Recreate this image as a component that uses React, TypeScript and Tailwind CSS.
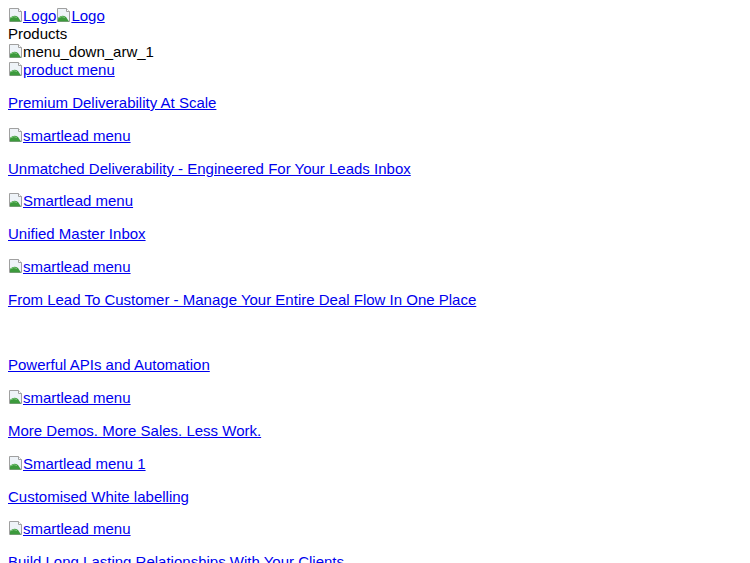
const BrokenImg = () => (
  <svg width="15" height="16" viewBox="0 0 15 16" className="inline-block align-[-2px]">
    <path d="M1.5 1.5h9l3 3v10h-12z" fill="#eef3f8" stroke="#a0a0a0" />
    <path d="M2 14.5 L2 11 Q6 7 10 10 L13 14.5 Z" fill="#3c9a3c" />
    <path d="M2 11 Q6 8.5 9 10.5" fill="none" stroke="#7cc47c" />
    <path d="M10.5 1.5v3h3" fill="#fff" stroke="#a0a0a0" />
  </svg>
)

function ImgLink({ alt }: { alt: string }) {
  return (
    <a href="#" className="text-[#0000ee]">
      <BrokenImg />
      <span className="underline">{alt}</span>
    </a>
  )
}

const items = [
  { img: "product menu", text: "Premium Deliverability At Scale" },
  { img: "smartlead menu", text: "Unmatched Deliverability - Engineered For Your Leads Inbox" },
  { img: "Smartlead menu", text: "Unified Master Inbox" },
  { img: "smartlead menu", text: "From Lead To Customer - Manage Your Entire Deal Flow In One Place" },
  { img: "", text: "Powerful APIs and Automation" },
  { img: "smartlead menu", text: "More Demos. More Sales. Less Work." },
  { img: "Smartlead menu 1", text: "Customised White labelling" },
  { img: "smartlead menu", text: "Build Long Lasting Relationships With Your Clients" },
]

export default function App() {
  return (
    <div className="min-h-[563px] bg-white px-2 pt-[7px] pb-2 text-[15px] text-black font-['Liberation_Sans',Arial,sans-serif] leading-[18px]">
      <div className="h-[18px]">
        <a href="#" className="text-[#0000ee]">
          <BrokenImg />
          <span className="underline">Logo</span>
        </a>
        <a href="#" className="text-[#0000ee]">
          <BrokenImg />
          <span className="underline">Logo</span>
        </a>
      </div>
      <div className="h-[18px]">Products</div>
      <div className="h-[18px]">
        <BrokenImg />
        menu_down_arw_1
      </div>
      {items.map((it, i) => (
        <div key={i}>
          <div className="h-[17px]">{it.img && <ImgLink alt={it.img} />}</div>
          <p className="my-4 h-[16.6px]">
            <a href="#" className="text-[#0000ee] underline">
              {it.text}
            </a>
          </p>
        </div>
      ))}
    </div>
  )
}
